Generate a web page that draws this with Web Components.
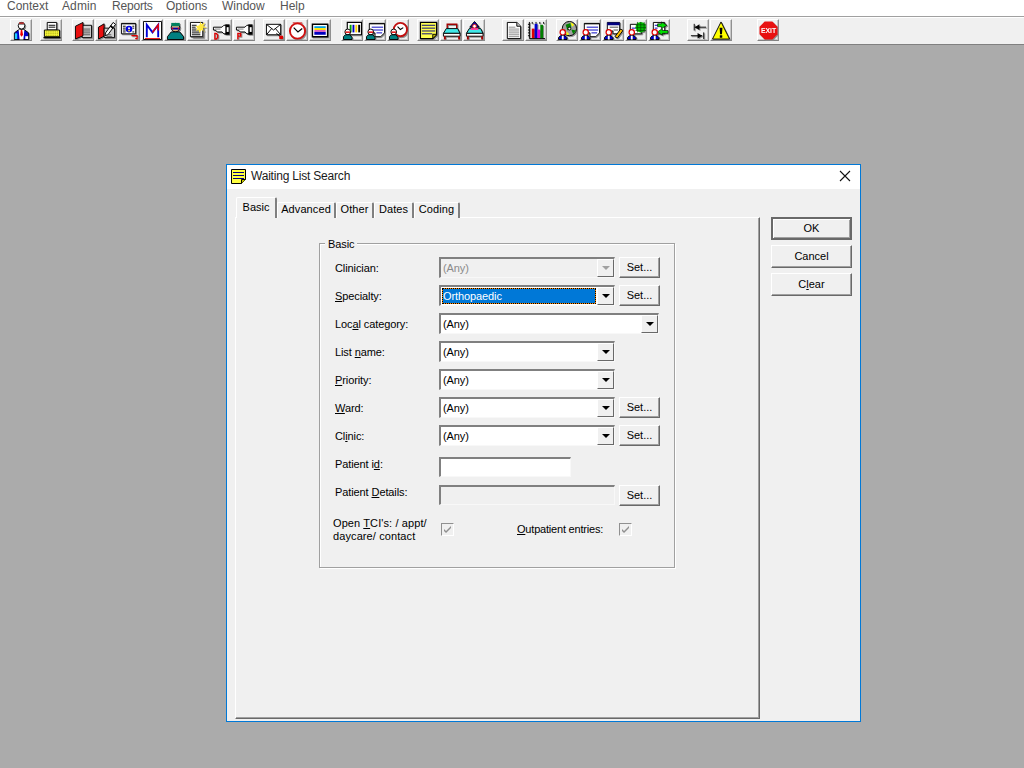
<!DOCTYPE html>
<html><head><meta charset="utf-8"><style>
html,body{margin:0;padding:0;height:100%;overflow:hidden}
body{background:#ababab;font:11px "Liberation Sans",Arial,sans-serif;letter-spacing:-.1px;color:#000;height:768px;position:relative}
</style></head><body>
<win-menubar><span style="width:41px">Context</span><span style="width:36px;letter-spacing:.1px">Admin</span><span style="width:40px;letter-spacing:-.2px">Reports</span><span style="width:42px">Options</span><span style="width:44px">Window</span><span style="width:25px">Help</span></win-menubar>
<win-toolbar>
<tool-group style="margin-left:10px"><tool-btn icon="doctor"></tool-btn></tool-group>
<tool-group style="margin-left:8px"><tool-btn icon="printer"></tool-btn></tool-group>
<tool-group style="margin-left:10px"><tool-btn icon="book"></tool-btn><tool-btn icon="bookpen"></tool-btn><tool-btn icon="paper8"></tool-btn><tool-btn icon="mail"></tool-btn><tool-btn icon="surgeon"></tool-btn><tool-btn icon="star"></tool-btn><tool-btn icon="handd"></tool-btn><tool-btn icon="handp"></tool-btn></tool-group>
<tool-group style="margin-left:8px"><tool-btn icon="envelope"></tool-btn><tool-btn icon="clock"></tool-btn><tool-btn icon="stripes"></tool-btn></tool-group>
<tool-group style="margin-left:10px"><tool-btn icon="chartman"></tool-btn><tool-btn icon="noteman"></tool-btn><tool-btn icon="clockman"></tool-btn></tool-group>
<tool-group style="margin-left:8px"><tool-btn icon="note"></tool-btn><tool-btn icon="bed"></tool-btn><tool-btn icon="bedman"></tool-btn></tool-group>
<tool-group style="margin-left:17px"><tool-btn icon="doc"></tool-btn><tool-btn icon="bars"></tool-btn></tool-group>
<tool-group style="margin-left:9px"><tool-btn icon="globeman"></tool-btn><tool-btn icon="note2man"></tool-btn><tool-btn icon="penman"></tool-btn><tool-btn icon="gridman"></tool-btn><tool-btn icon="arrowman"></tool-btn></tool-group>
<tool-group style="margin-left:17px"><tool-btn icon="swap"></tool-btn><tool-btn icon="warn"></tool-btn></tool-group>
<tool-group style="margin-left:25px"><tool-btn icon="exit"></tool-btn></tool-group>
</win-toolbar>
<win-dialog heading="Waiting List Search">
  <win-tabs>
    <win-tab slot="tabs" active style="width:41px">Basic</win-tab><win-tab slot="tabs" style="width:59px">Advanced</win-tab><win-tab slot="tabs" style="width:38px">Other</win-tab><win-tab slot="tabs" style="width:40px">Dates</win-tab><win-tab slot="tabs" style="width:46px">Coding</win-tab>
    <win-group legend="Basic">
      <form-row><span slot="label">Clinician:</span><win-combo disabled value="(Any)"></win-combo><win-button slot="after" small>Set...</win-button></form-row>
      <form-row><span slot="label"><u>S</u>pecialty:</span><win-combo focused value="Orthopaedic"></win-combo><win-button slot="after" small>Set...</win-button></form-row>
      <form-row><span slot="label">Loc<u>a</u>l category:</span><win-combo wide value="(Any)"></win-combo></form-row>
      <form-row><span slot="label">List <u>n</u>ame:</span><win-combo value="(Any)"></win-combo></form-row>
      <form-row><span slot="label"><u>P</u>riority:</span><win-combo value="(Any)"></win-combo></form-row>
      <form-row><span slot="label"><u>W</u>ard:</span><win-combo value="(Any)"></win-combo><win-button slot="after" small>Set...</win-button></form-row>
      <form-row><span slot="label">Cl<u>i</u>nic:</span><win-combo value="(Any)"></win-combo><win-button slot="after" small>Set...</win-button></form-row>
      <form-row style="margin-top:4px;--label-top:1px"><span slot="label">Patient i<u>d</u>:</span><win-field style="width:132px"></win-field></form-row>
      <form-row style="--label-top:1px"><span slot="label">Patient <u>D</u>etails:</span><win-field disabled style="width:176px"></win-field><win-button slot="after" small>Set...</win-button></form-row>
      <check-row><span slot="a" style="letter-spacing:.1px">Open <u>T</u>CI's: / appt/<br>daycare/ contact</span><span slot="b" style="letter-spacing:-.2px"><u>O</u>utpatient entries:</span></check-row>
    </win-group>
  </win-tabs>
  <win-button slot="actions" default>OK</win-button>
  <win-button slot="actions">Cancel</win-button>
  <win-button slot="actions">C<u>l</u>ear</win-button>
</win-dialog>
<script>
function def(name, html){
  class C extends HTMLElement{
    constructor(){super();this.attachShadow({mode:'open'});if(typeof html!=='function')this.shadowRoot.innerHTML=html;}
    connectedCallback(){ if(typeof html==='function') this.shadowRoot.innerHTML=html(this); }
  }
  customElements.define(name,C);
}
const teal=`<circle cx="5" cy="11.500" r="3" fill="#fff" stroke="#000"/><path d="M2.500 11h5v1.500h-5z" fill="#e00000"/><path d="M.5 19.500v-3l2-2h5l2 3v2z" fill="#008080" stroke="#000"/>`;
const man=`<circle cx="5" cy="12" r="2.800" fill="#fff" stroke="#e00000" stroke-width="1.300"/><path d="M.5 19.500v-2l2-2h5l2 2v2z" fill="#0000c8" stroke="#000"/><path d="M4 15.500h2v4H4z" fill="#fff"/>`;
const noteBack=`<path d="M3.500 2.500h16v10l-4 4h-6v-4h-6z" fill="#fff" stroke="#000"/><path d="M3.500 2.500h16v1h-16z" fill="#000"/><path d="M6 6.500h12M6 9.500h12M11 12.500h6" stroke="#0000c0"/>`;
const bedBase=`<path d="M1.500 13l3-5h12l2.500 5z" fill="#40e8e8" stroke="#000"/><path d="M1.500 13h17.500v3h-17.500z" fill="#fff" stroke="#000"/><path d="M3 16v3.500M18 16v3.500" stroke="#a00000" stroke-width="2"/>`;
const hand=`<path d="M1.500 6.500h9l2-2h3v9h-3l-2-2h-5l-2-2h-2z" fill="#fff" stroke="#000"/><path d="M3 8.500h6" stroke="#808080"/><path d="M14 3.500h4.500v11H14z" fill="#000"/><path d="M15.500 6.500h2v5h-2z" fill="#fff"/>`;
const ic={
doctor:`<circle cx="10" cy="5" r="3.500" fill="#fff" stroke="#000"/><path d="M7.500 1.500h5v2h-5z" fill="#c02020"/><path d="M7 3.500h6" stroke="#808080"/><path d="M2.500 19.500v-7l4-3h7l4 3v7z" fill="#0000c8" stroke="#000"/><path d="M7 9.500h6l-1 10H8z" fill="#fff"/><path d="M9.300 9.500h1.400l1 5-1.700 2-1.400-2z" fill="#e00"/><path d="M3 13h2.500v6H3z" fill="#20d0ff"/><path d="M14 16h3v3h-3z" fill="#fff"/>`,
printer:`<path d="M5.500 1.500h10v8h-10z" fill="#fff" stroke="#000"/><path d="M7 4.500h7M7 6.500h7" stroke="#000"/><path d="M2.500 9.500h16v7h-16z" fill="#ffff40" stroke="#000"/><path d="M4 11.500h13M4 13.500h13M4 15.500h13" stroke="#808000" stroke-dasharray="1 1"/><path d="M1.500 17.500h18" stroke="#000" stroke-width="1.500"/>`,
book:`<path d="M8.500 4.500h10v13h-10z" fill="#d0d0d0" stroke="#000"/><path d="M10 8.500h7M10 10.500h7M10 12.500h7M10 14.500h7" stroke="#555"/><path d="M1.500 5.500l8-4v14l-8 3.500z" fill="#e81010" stroke="#000"/>`,
bookpen:`<path d="M1.500 6.500l6-3.500v13l-6 3z" fill="#e81010" stroke="#000"/><path d="M7.500 7.500h11v10h-11z" fill="#d0d0d0" stroke="#000"/><path d="M9 12.500L17 1.500l2.500 2L11.500 14.500l-3 1z" fill="#fff" stroke="#000"/><path d="M14 5l3 2.500" stroke="#000" stroke-width="2"/><path d="M10 14.500h5M10 16.500h6" stroke="#555"/>`,
paper8:`<path d="M1.500 2.500h15v11h-15z" fill="#fff" stroke="#000"/><path d="M1.500 2.500h15v1h-15z" fill="#000"/><path d="M3 5.500h3M3 7.500h3M3 9.500h3M3 11.500h3M13 5.500h2M13 7.500h2M13 11.500h2" stroke="#000"/><circle cx="9.500" cy="8.500" r="3.500" fill="#0000e0"/><circle cx="9.500" cy="7.500" r="1" fill="#fff"/><circle cx="9.500" cy="10" r="1" fill="#ffe000"/><path d="M12 15.500h6v3h-2" stroke="#e00000" fill="none" stroke-width="1.300"/>`,
mail:`<path d="M.5.5h19v19H.5z" fill="#fff" stroke="#000"/><path d="M4 17V4l6 8 6-8v13" fill="none" stroke="#0000d8" stroke-width="2"/><path d="M10 12l6-8v6" stroke="#e00" stroke-width="1.500" fill="none"/><path d="M2 18.500h16" stroke="#e00"/>`,
surgeon:`<circle cx="10" cy="7" r="4.500" fill="#e0b080" stroke="#000"/><path d="M5.500 2h9v3.500h-9z" fill="#008060"/><path d="M5.500 7h9v2h-9z" fill="#0000a0"/><path d="M6 7h1.500v1.500H6zM12.500 7H14v1.500h-1.500z" fill="#e00000"/><path d="M1.500 19.500v-3l4-5h9l4 5v3z" fill="#008080" stroke="#000"/>`,
star:`<path d="M1.500 1.500h13v15h-13z" fill="#fff" stroke="#000"/><path d="M3 4.500h5M3 6.500h4M3 8.500h5M3 10.500h9M3 12.500h9M3 14.500h9" stroke="#000"/><path d="M12 .5l1 3 4-2-2 4 4 1-4 1 2 4-4-2-2 3-1-3-3 1 2-3-2-2 4-1z" fill="#ffe840"/><path d="M15.500 7v10.500h-12" stroke="#606060" fill="none"/>`,
handd:hand+`<path d="M3 13v6h1.500l1.500-1.500v-3L4.500 13z" fill="none" stroke="#e00000" stroke-width="1.400"/>`,
handp:hand+`<path d="M3 19.500V13h3v3H3" fill="none" stroke="#e00000" stroke-width="1.400"/>`,
envelope:`<path d="M1.500 3.500h15v11h-15z" fill="#fff" stroke="#000"/><path d="M1.500 3.500l7.500 6 7.500-6M1.500 14.500l5.500-6.500M16.500 14.500L11 8" fill="none" stroke="#000"/><path d="M12 13l5 4" stroke="#000"/><path d="M15 15.500h4v3.500h-4z" fill="#e00000"/>`,
clock:`<circle cx="10" cy="10.500" r="8" fill="#fff" stroke="#d01010" stroke-width="2"/><path d="M6 7l4.500 4.500L15 8" fill="none" stroke="#000" stroke-width="1.300"/><path d="M5 2h10" stroke="#d01010"/>`,
stripes:`<path d="M1.500 3.500h16v13h-16z" fill="#fff" stroke="#000" stroke-width="1.500"/><path d="M3.500 5.500h12v2h-12z" fill="#00a0e0"/><path d="M3.500 7.500h12v2h-12z" fill="#ffe000"/><path d="M3.500 9.500h12v2h-12z" fill="#e060c0"/><path d="M3.500 11.500h12v3h-12z" fill="#0000c0"/>`,
chartman:`<path d="M4.500 1.500h15v13h-15z" fill="#fff" stroke="#000" stroke-width="1.200"/><path d="M7 4h2v8H7z" fill="#00a000"/><path d="M10 4h2v8h-2z" fill="#0000c0"/><path d="M13 4h2v8h-2z" fill="#ffd000"/><path d="M16 4h2v8h-2z" fill="#000"/>`+teal,
noteman:noteBack+teal,
clockman:`<circle cx="12" cy="9" r="7" fill="#fff" stroke="#c01010" stroke-width="2"/><path d="M9 6l3 3 3-2" fill="none" stroke="#000" stroke-width="1.200"/>`+teal,
note:`<path d="M1.500 1.500h17v13l-4 4h-13z" fill="#ffff50" stroke="#000" stroke-width="1.300"/><path d="M3 4.500h14M3 7.500h14M3 10.500h14M3 13.500h11" stroke="#000080"/><path d="M14.500 18v-4h4" fill="#c0c000" stroke="#000"/>`,
bed:`<path d="M5.500 8V3.500h10V8" fill="none" stroke="#a00000" stroke-width="1.500"/>`+bedBase,
bedman:bedBase+`<path d="M10 .5l5 6H5z" fill="#0000c0" stroke="#000"/><circle cx="10" cy="5.500" r="2" fill="#fff" stroke="#e00000"/><path d="M6 7.500h8v2H6z" fill="#ff40a0"/>`,
doc:`<path d="M3.500 1.500h10l4 4v13h-14z" fill="#fff" stroke="#000"/><path d="M13.500 1.500v4h4" fill="#ccc" stroke="#000"/><path d="M5 6.500h7M5 8.500h11M5 10.500h11M5 12.500h11M5 14.500h11M5 16.500h11" stroke="#888"/>`,
bars:`<path d="M2.500 1v17.500H19" fill="none" stroke="#000"/><path d="M1 3.500h2M1 6.500h2M1 9.500h2M1 12.500h2M1 15.500h2M5.500 1v2M9.500 1v2M13.500 1v2M17.500 1v2" stroke="#000"/><path d="M5 8h3v10H5z" fill="#e00000"/><path d="M8 3h3v15H8z" fill="#0000d0"/><path d="M11 9h3v9h-3z" fill="#e000e0"/><path d="M14 4h3v14h-3z" fill="#008000"/>`,
globeman:`<circle cx="12" cy="8" r="7.500" fill="#a0a0a0" stroke="#000"/><path d="M8 4l5-2 1 5-4 3zM14 9l5 1-3 4z" fill="#008000"/><path d="M13 1l4 3-2 2zM9 11l3 3-3 1z" fill="#ffff00"/><circle cx="12" cy="8" r="1.500" fill="#fff" stroke="#000"/>`+man,
note2man:noteBack+man,
penman:`<path d="M3.500 1.500h13v12h-7v-3h-6z" fill="#fff" stroke="#000"/><path d="M3.500 1.500h13v3h-13z" fill="#000080"/><path d="M6 6.500h9M10 9.500h5" stroke="#444"/><path d="M11.500 16.500l6-8 2.500 1.500-6 8z" fill="#ffc000" stroke="#000"/>`+man,
gridman:`<path d="M3.500 3.500h12v10h-12z" fill="#fff" stroke="#000"/><path d="M5 7.500h5" stroke="#0000c0"/><circle cx="14.500" cy="6.500" r="5.500" fill="#00c000"/><path d="M11 1v11M14.500 1v11M18 1v11M9 4h11M9 7h11M9 10h11" stroke="#005000" stroke-width=".8"/>`+man,
arrowman:`<path d="M3.500 1.500h12v12h-12z" fill="#fff" stroke="#000"/><path d="M5 4.500h5M5 7.500h3" stroke="#0000c0"/><path d="M12 1l6 3.500-6 3.500V6H8V3h4z" fill="#00e000" stroke="#000" stroke-width=".7"/><path d="M13 8l-5 3.500 5 3.500v-2h6v-3h-6z" fill="#00e000" stroke="#000" stroke-width=".7"/>`+man,
swap:`<path d="M5.500 3v7" stroke="#000"/><path d="M6 6.500h12" stroke="#000"/><path d="M6 6.500l5-3v6z" fill="#000"/><path d="M2 15.500h12" stroke="#000"/><path d="M14 15.500l-5-3v6z" fill="#000"/><path d="M15.500 12v7" stroke="#000"/>`,
warn:`<path d="M9.500 1l9 18H.5z" fill="#ffff00" stroke="#000" stroke-linejoin="round"/><path d="M8 7h3l-.500 7h-2zM8.200 15h2.600v2.500H8.200z" fill="#000"/>`,
exit:`<path d="M6 .5h8l5.500 5.500v8L14 19.500H6L.5 14V6z" fill="#e81010"/><text x="10" y="12.800" font-family="Liberation Sans" font-weight="700" font-size="8" letter-spacing="0" fill="#fff" text-anchor="middle" textLength="16" lengthAdjust="spacingAndGlyphs">EXIT</text>`
};

def('win-menubar',`<style>:host{display:flex;gap:14px;height:16px;background:#fff;padding-left:7px;box-sizing:border-box;font:12px/13px "Liberation Sans",sans-serif;letter-spacing:0;color:#555;white-space:nowrap}::slotted(span){display:block}</style><slot></slot>`);
def('win-toolbar',`<style>:host{display:flex;align-items:flex-start;height:29px;box-sizing:border-box;background:#f0f0f0;border-top:1px solid #a0a0a0;border-bottom:1px solid #808080;box-shadow:inset 0 1px #fff;padding-top:2px}</style><slot></slot>`);
def('tool-group',`<style>:host{display:flex;gap:1px}</style><slot></slot>`);
def('tool-btn',h=>`<style>:host{display:flex;align-items:center;justify-content:center;width:22px;height:22px;box-sizing:border-box;background:#f0f0f0;border:1px solid;border-color:#fff #909090 #808080 #fff;box-shadow:inset -1px -1px #c8c8c8}svg{width:19px;height:19px;display:block;filter:drop-shadow(1px 1px 0 #909090)}</style><svg viewBox="0 0 20 20">${ic[h.getAttribute('icon')]||''}</svg>`);
def('win-dialog',h=>`<style>
:host{display:block;position:absolute;left:226px;top:164px;width:635px;height:558px;box-sizing:border-box;border:1px solid #0078d7;background:#f0f0f0}
.title{display:flex;align-items:center;height:24px;background:#fff;padding:0 0 2px 3px;box-sizing:border-box;gap:4px;font:12px "Liberation Sans",sans-serif;color:#1a1a1a;letter-spacing:-.2px}
.icon{width:17px;height:17px;display:block}
.close{margin-left:auto;width:12px;height:12px;margin-right:9px;display:block}
.body{display:flex;padding:8px 8px 3px 8px;height:533px;box-sizing:border-box}
.actions{display:flex;flex-direction:column;gap:5px;width:81px;margin-left:11px;margin-top:20px}
</style>
<div class="title"><svg class="icon" viewBox="0 0 17 17"><path d="M1.500 1.500h14v10l-4 4h-10z" fill="#ffff40" stroke="#000"/><path d="M3 4.500h11M3 7.500h11M3 10.500h11" stroke="#000080"/><path d="M11.500 15.500v-4h4" fill="#c0c000" stroke="#000"/></svg><span>${h.getAttribute('heading')}</span>
<svg class="close" viewBox="0 0 12 12"><path d="M1 1l10 10M11 1L1 11" stroke="#111" stroke-width="1.100"/></svg></div>
<div class="body"><slot></slot><div class="actions"><slot name="actions"></slot></div></div>`);
def('win-tabs',`<style>
:host{display:flex;flex-direction:column;width:525px;height:522px}
.strip{display:flex;height:21px;padding-left:1px;align-items:flex-end;position:relative;z-index:1;margin-bottom:-1px}
.page{flex:1;box-sizing:border-box;border:1px solid;border-color:#fff #696969 #696969 #fff;box-shadow:inset -1px -1px #a0a0a0;background:#f0f0f0;padding:25px 0 0 83px}
</style><div class="strip"><slot name="tabs"></slot></div><div class="page"><slot></slot></div>`);
def('win-tab',`<style>
:host{display:block;height:16px;box-sizing:border-box;text-align:center;letter-spacing:.1px;background:#f0f0f0;border:1px solid;border-color:#fff #808080 #f0f0f0 #fff;border-bottom:none;border-right:2px solid #808080;border-radius:2px 2px 0 0;line-height:13px}
:host([active]){height:21px;padding-top:3px;letter-spacing:0}
</style><slot></slot>`);
def('win-group',h=>`<style>
:host{display:block;position:relative;width:356px;height:325px;box-sizing:border-box;border:1px solid #a0a0a0;box-shadow:1px 1px #fff,inset 1px 1px #fff;padding:13px 0 0 15px}
.legend{position:absolute;left:5px;top:-6px;background:#f0f0f0;padding:0 3px;line-height:13px}
</style><div class="legend">${h.getAttribute('legend')}</div><slot></slot>`);
def('form-row',`<style>
:host{display:flex;align-items:flex-start;height:28px}
.l{width:104px;padding-top:var(--label-top,5px);flex:none;line-height:13px}
.a{margin-left:4px}
</style><div class="l"><slot name="label"></slot></div><slot></slot><div class="a"><slot name="after"></slot></div>`);
def('win-combo',h=>{const dis=h.hasAttribute('disabled'),foc=h.hasAttribute('focused'),w=h.hasAttribute('wide')?220:176;
return `<style>
:host{display:block;width:${w}px;height:21px;box-sizing:border-box;border:solid;border-width:2px 1px 1px 2px;border-color:#808080 #f8f8f8 #f8f8f8 #808080;background:${dis?'#f0f0f0':'#fff'}}
.in{display:flex;height:100%}
.v{flex:1;line-height:15px;padding:2px 0 0 2px;color:${dis?'#8a8a8a':'#000'}}
.foc{background:linear-gradient(#0078d7,#0078d7) padding-box,linear-gradient(#f80,#f80) border-box;border:1px dotted #000;color:#fff;margin:1px;padding:0;line-height:14px}
.b{width:17px;box-sizing:border-box;background:#f0f0f0;border:1px solid;border-color:#fff #696969 #696969 #fff;display:flex;align-items:center;justify-content:center}
.t{width:0;height:0;border:4px solid transparent;border-top:4px solid ${dis?'#a0a0a0':'#000'};border-bottom:0}
</style><div class="in"><div class="v ${foc?'foc':''}">${h.getAttribute('value')}</div><div class="b"><i class="t"></i></div></div>`});
def('win-field',h=>`<style>:host{display:block;height:20px;box-sizing:border-box;border:solid;border-width:2px 1px 1px 2px;border-color:#808080 #f8f8f8 #f8f8f8 #808080;background:${h.hasAttribute('disabled')?'#f0f0f0':'#fff'}}</style>`);
def('win-button',h=>{const s=h.hasAttribute('small'),d=h.hasAttribute('default');
return `<style>
:host{display:flex;align-items:center;justify-content:center;box-sizing:border-box;width:${s?41:81}px;height:${s?21:23}px;padding-bottom:2px;background:#f0f0f0;letter-spacing:0;
border:${d?'2px solid #696969':'1px solid'};${d?'':'border-color:#fff #696969 #696969 #fff;'}box-shadow:${d?'inset 1px 1px #fff,inset -1px -1px #a0a0a0':'inset -1px -1px #a0a0a0'}}
</style><slot></slot>`});
def('win-check',`<style>:host{display:block;width:13px;height:13px;box-sizing:border-box;background:#f0f0f0;border:1px solid;border-color:#909090 #fff #fff #909090}svg{display:block}</style><svg width="11" height="11" viewBox="0 0 11 11"><path d="M2 5l2 2 5-5v2L4 9 2 7z" fill="#909090"/></svg>`);
def('check-row',`<style>
:host{display:flex;align-items:center;margin:3px 0 0 -2px;height:26px}
.a{width:108px;line-height:13px;padding-top:2px}.b{margin-left:63px;width:102px}
win-check{flex:none}
</style><div class="a"><slot name="a"></slot></div><win-check></win-check><div class="b"><slot name="b"></slot></div><win-check></win-check>`);
</script>
</body></html>
